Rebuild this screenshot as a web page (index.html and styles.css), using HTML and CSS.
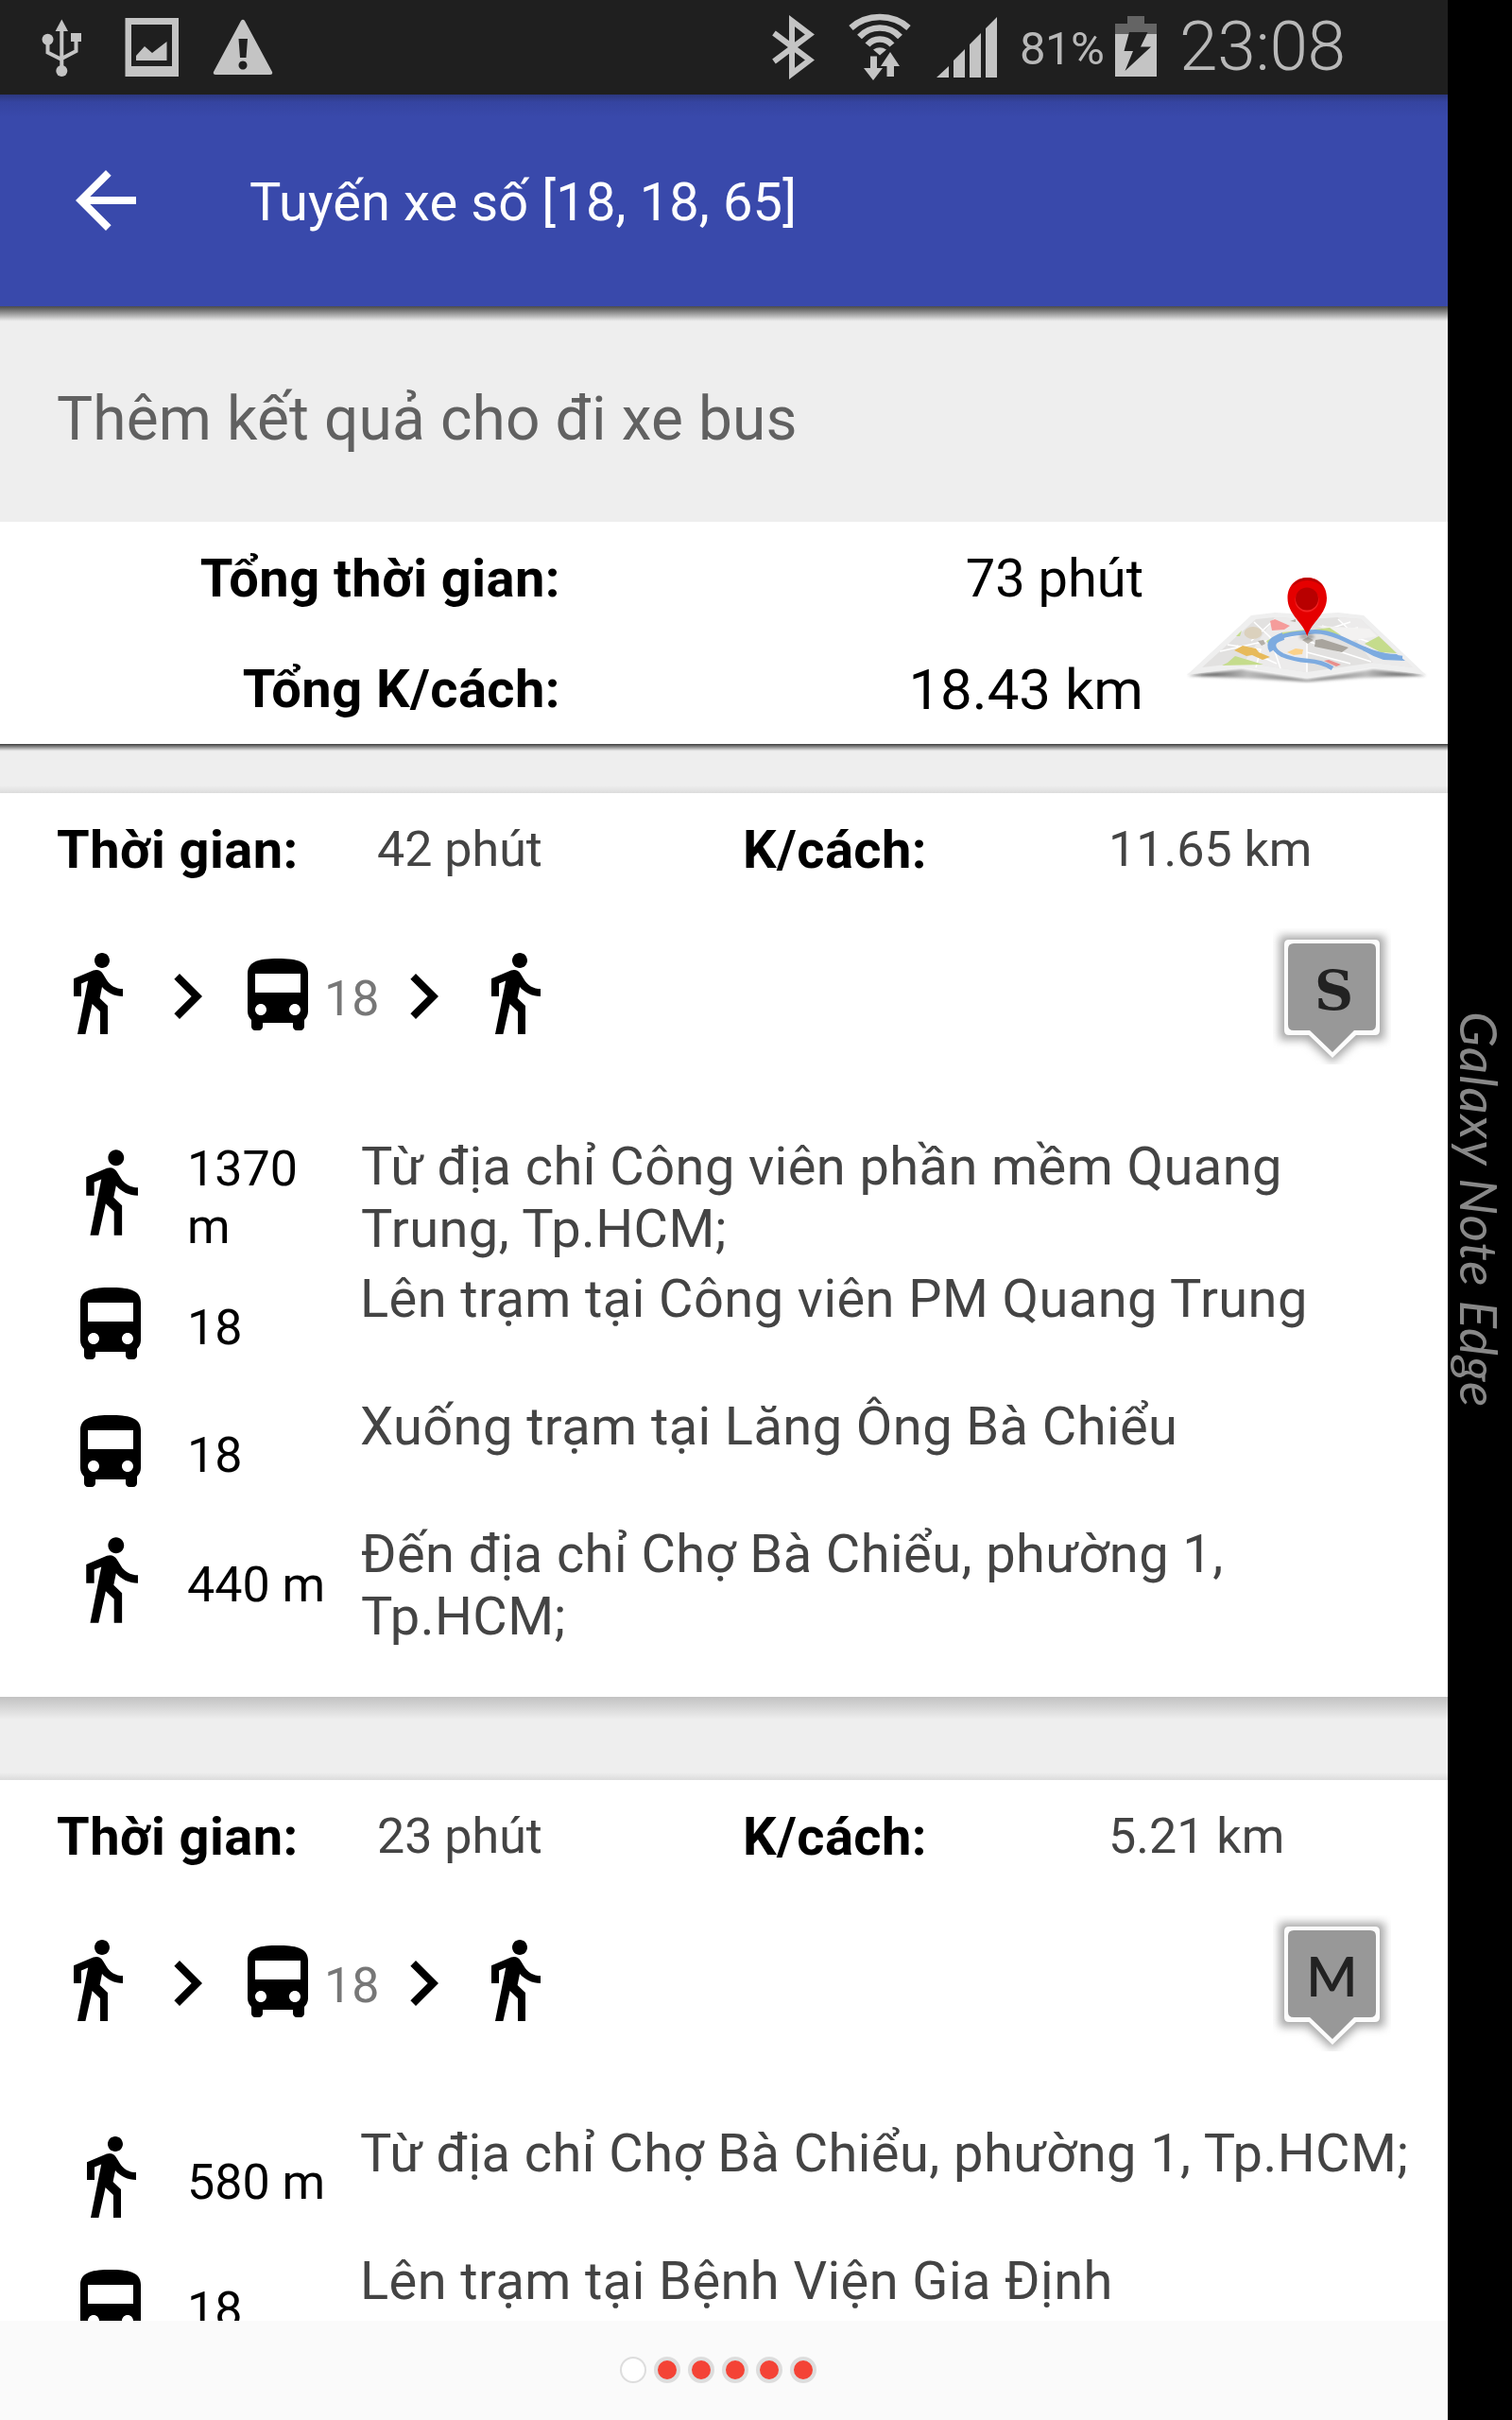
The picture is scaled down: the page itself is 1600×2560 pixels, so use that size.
FILE: index.html
```html
<!DOCTYPE html>
<html lang="vi">
<head>
<meta charset="utf-8">
<title>Tuyến xe số [18, 18, 65]</title>
<link rel="stylesheet" href="styles.css">
</head>
<body>
<svg class="sprite" aria-hidden="true">
  <symbol id="walk" viewBox="0 0 24 24"><path d="M13.5 5.5c1.1 0 2-.9 2-2s-.9-2-2-2-2 .9-2 2 .9 2 2 2zM9.8 8.9L7 23h2.1l1.8-8 2.1 2v6h2v-7.5l-2.1-2 .6-3C14.8 12 16.8 13 19 13v-2c-1.9 0-3.5-1-4.3-2.4l-1-1.6c-.4-.6-1-1-1.7-1-.3 0-.5.1-.8.1L6 8.3V13h2V9.6l1.8-.7"/></symbol>
  <symbol id="bus" viewBox="0 0 24 24"><path d="M4 16c0 .88.39 1.67 1 2.22V20c0 .55.45 1 1 1h1c.55 0 1-.45 1-1v-1h8v1c0 .55.45 1 1 1h1c.55 0 1-.45 1-1v-1.78c.61-.55 1-1.34 1-2.22V6c0-3.5-3.58-4-8-4s-8 .5-8 4v10zm3.500 1c-.83 0-1.500-.67-1.500-1.500S6.670 14 7.500 14s1.500.67 1.500 1.500S8.330 17 7.500 17zm9 0c-.83 0-1.500-.67-1.500-1.500s.67-1.500 1.500-1.500 1.500.67 1.500 1.500-.67 1.500-1.500 1.500zm1.500-6H6V6h12v5z"/></symbol>
  <symbol id="next" viewBox="0 0 24 24"><path d="M10 6L8.590 7.410 13.170 12l-4.580 4.590L10 18l6-6z"/></symbol>
  <symbol id="pin" viewBox="0 0 125 144">
    <path d="M7 8H118V118H90L63 142 36 118H7z" fill="#888" fill-opacity=".75" filter="url(#soft)"/>
    <path d="M17 12H108Q113 12 113 17V108Q113 113 108 113H88L63 137 38 113H17Q12 113 12 108V17Q12 12 17 12z" fill="#fcfcfc"/>
    <path d="M22 16H103Q109 16 109 22V102Q109 108 103 108H86L63 131 39 108H22Q16 108 16 102V22Q16 16 22 16z" fill="#989898"/>
  </symbol>
  <filter id="soft" x="-20%" y="-20%" width="140%" height="140%" color-interpolation-filters="sRGB"><feGaussianBlur stdDeviation="5"/></filter>
</svg>

<div class="device">
  <main class="screen">
    <div class="status">
      <svg class="status-left" viewBox="0 0 300 100" fill="#c4c4c4">
        <path d="M65.300 20.500L72 33H58.600z"/>
        <path d="M65.300 32V72M50.500 44V55.500L65.300 63M80.500 42V54L65.300 62" fill="none" stroke="#c4c4c4" stroke-width="4"/>
        <circle cx="65.300" cy="75" r="6"/><circle cx="50.500" cy="41.700" r="6"/><path d="M75 35h11v9H75z"/>
        <path fill-rule="evenodd" d="M132.500 19H189V81H132.500zM139 26V70H182V26z"/>
        <path d="M144 59l9-10 8 7 15.500-12v20H144z"/>
        <path fill-rule="evenodd" d="M255 22Q257 19.500 259 22L288 76Q289 79 286 79H228Q225 79 226 76zM252.500 41L254 61H260.500L262 41zM257 64.500a4.500 4.500 0 1 0 .01 0z"/>
      </svg>
      <svg class="status-net" viewBox="810 0 250 100" fill="#c4c4c4">
        <path d="M819 35L857 63.500 838 78V22L857 36.500 819 65" fill="none" stroke="#c4c4c4" stroke-width="6"/>
        <g fill="none" stroke="#c4c4c4" stroke-width="6.500"><path d="M900.500 29.500Q913 18 931 18T961.500 29.500"/><path d="M909.500 39Q918 29.500 931 29.500T952.500 39"/><path d="M918 47.500Q923 41.500 931 41.500T944 47.500"/></g>
        <path d="M924 52.500Q931 48 938 52.500L931 58.500zM921 59.500h7V72h6L924 85 914 72h7zM942 55l10 15h-6V81h-7.500V70H932z"/>
        <path d="M991 82L1004 70V82zM1009 82V64L1021 52V82zM1026 82V47L1038 35V82zM1043 82V30L1055 18V82z"/>
      </svg>
      <span class="percent">81%</span>
      <svg class="battery" viewBox="1180 0 44 100"><path fill="#646464" d="M1193 17h18v8h13v12h-44V25h13z"/><path fill="#c4c4c4" d="M1180 36h44v45h-44z"/><path fill="#1f1f1f" d="M1195 34h19.500L1207 49.500h11L1190.500 75 1199 54h-9.500z"/></svg>
      <span class="clock">23:08</span>
    </div>

    <header class="toolbar">
      <svg class="back" viewBox="0 0 24 24" fill="#fff"><path d="M20 11H7.830l5.590-5.590L12 4l-8 8 8 8 1.410-1.410L7.830 13H20v-2z"/></svg>
      <h1 class="title">Tuyến xe số [18, 18, 65]</h1>
    </header>

    <div class="subtitle"><span class="subtitle-text">Thêm kết quả cho đi xe bus</span></div>

    <section class="summary">
      <div class="totals">
        <b class="label">Tổng thời gian:</b><span class="total">73 phút</span>
        <b class="label">Tổng K/cách:</b><span class="total total-km">18.43 km</span>
      </div>
      <svg class="map" viewBox="0 0 300 150">
        <defs>
          <linearGradient id="fold" x1="0" x2="1"><stop offset="0" stop-color="#333"/><stop offset=".25" stop-color="#bbb"/><stop offset=".5" stop-color="#777"/><stop offset=".75" stop-color="#bbb"/><stop offset="1" stop-color="#333"/></linearGradient>
          <filter id="haze"><feGaussianBlur stdDeviation="1.500"/></filter>
        </defs>
        <path d="M18 124.500L75 118 144 129 214 118 270 124.500 200 127 144 131 90 128z" fill="url(#fold)" filter="url(#haze)"/>
        <path d="M17 124L85 61 110 58 144 60 177 58 204 61 270 124 214 116 144 127 75 116z" fill="#efefef"/>
        <path d="M33 116L90 65 110 63 144 65 177 63 201 65 256 116 214 111 144 121 77 111z" fill="#e2e1e0"/>
        <path d="M110 63L144 65V121L77 111zM177 63L201 65 256 116 214 111z" fill="#efeeed" opacity=".8"/>
        <g fill="none" stroke="#fff" stroke-width="1.500"><path d="M52 99L110 86 144 80M88 68L105 84 116 117M70 93L112 112M144 88L212 110M160 72L218 92M177 65L200 87M144 100L190 112M165 76L190 68M60 92L95 97 90 116M144 65V121M170 80L198 74M110 65L85 88"/></g>
        <path d="M155 72L210 75 218 83 190 88z" fill="#f3f2f1"/>
        <g fill="#c5dc8c"><path d="M205 91L220 83 239 101 222 100zM68 104L60 111 54 114 98 113zM101 88L118 79 142 76 143 80 117 84 103 91zM151 76L168 74 180 82 165 80zM69 83L75 77 73 83z"/></g>
        <path d="M118 82Q100 93 118 103 130 108 145 109T171 117" fill="none" stroke="#7dabe0" stroke-width="4.500"/>
        <path d="M108 98C103 90 110 86 119 83" fill="none" stroke="#7dabe0" stroke-width="8"/>
        <path d="M116 84Q126 80 144 79 160 76 178 84C205 96 214 103 245 106" fill="none" stroke="#7dabe0" stroke-width="4.500"/>
        <path d="M205 94Q220 102 239 102L248 109 225 108Q213 104 203 98z" fill="#7dabe0"/>
        <ellipse cx="87" cy="79.500" rx="9.500" ry="6.500" fill="#dbd1bd"/>
        <path d="M105 67L110 65 126 72 120 76 107 77z" fill="#f59c9b"/><path d="M162 109L167 108 180 113 175 115z" fill="#e98e8b"/>
        <path d="M76 93L90 96 93 100 105 105 97 108 86 103 80 104 67 98z" fill="#e7ba5a"/><path d="M123 100L132 96 140 97 139 102 130 103z" fill="#fbd28a"/>
        <path d="M153 87L160 86 188 95 181 100 152 94z" fill="#a8a49d"/><path d="M92 88L98 87 100 91 96 93zM139 87L145 84 151 87 145 91zM126 67L132 65 132 68z" fill="#b5b0a8"/>
        <ellipse cx="144" cy="83.500" rx="8" ry="3" fill="#555" opacity=".45" filter="url(#haze)"/>
        <path d="M144.300 83C140 68 123.500 60 123.500 42.500 123.500 30 132 21 144.300 21S165 30 165 42.500C165 60 148.500 68 144.300 83z" fill="#e50000"/>
        <path d="M127 32Q133 21 144.300 21T162 32Q154 24 144.300 24T127 32z" fill="#b90000"/>
        <circle cx="144" cy="45" r="12.500" fill="#f52222"/><circle cx="144" cy="43.500" r="12" fill="#b80000"/>
      </svg>
    </section>

    <div class="gap gap-first"></div>

    <section class="card">
      <div class="card-head">
        <b class="head-time">Thời gian:</b><span class="time">42 phút</span><b class="head-km">K/cách:</b><span class="km">11.65 km</span>
      </div>
      <div class="route">
        <svg class="icon route-walk"><use href="#walk"/></svg>
        <svg class="icon"><use href="#next"/></svg>
        <svg class="icon"><use href="#bus"/></svg>
        <span class="route-no">18</span>
        <svg class="icon"><use href="#next"/></svg>
        <svg class="icon route-walk"><use href="#walk"/></svg>
        <svg class="marker" viewBox="0 0 125 144"><use href="#pin"/><text class="letter-s" x="64.500" y="85.500">S</text></svg>
      </div>
      <div class="steps">
        <div class="step step-long"><svg class="icon step-walk"><use href="#walk"/></svg><span class="dist dist-two">1370 m</span><span class="desc">Từ địa chỉ Công viên phần mềm Quang<br>Trung, Tp.HCM;</span></div>
        <div class="step"><svg class="icon"><use href="#bus"/></svg><span class="dist">18</span><span class="desc">Lên trạm tại Công viên PM Quang Trung</span></div>
        <div class="step"><svg class="icon"><use href="#bus"/></svg><span class="dist">18</span><span class="desc">Xuống trạm tại Lăng Ông Bà Chiểu</span></div>
        <div class="step step-long"><svg class="icon step-walk"><use href="#walk"/></svg><span class="dist">440 m</span><span class="desc">Đến địa chỉ Chợ Bà Chiểu, phường 1,<br>Tp.HCM;</span></div>
      </div>
    </section>

    <div class="gap"></div>

    <section class="card card-cut">
      <div class="card-head">
        <b class="head-time">Thời gian:</b><span class="time">23 phút</span><b class="head-km">K/cách:</b><span class="km">5.21 km</span>
      </div>
      <div class="route">
        <svg class="icon route-walk"><use href="#walk"/></svg>
        <svg class="icon"><use href="#next"/></svg>
        <svg class="icon"><use href="#bus"/></svg>
        <span class="route-no">18</span>
        <svg class="icon"><use href="#next"/></svg>
        <svg class="icon route-walk"><use href="#walk"/></svg>
        <svg class="marker" viewBox="0 0 125 144"><use href="#pin"/><text class="letter-m" x="62.500" y="86">M</text></svg>
      </div>
      <div class="steps">
        <div class="step"><svg class="icon step-near"><use href="#walk"/></svg><span class="dist">580 m</span><span class="desc">Từ địa chỉ Chợ Bà Chiểu, phường 1, Tp.HCM;</span></div>
        <div class="step"><svg class="icon"><use href="#bus"/></svg><span class="dist">18</span><span class="desc">Lên trạm tại Bệnh Viện Gia Định</span></div>
      </div>
    </section>

    <footer class="pager">
      <i class="dot dot-current"></i><i class="dot"></i><i class="dot"></i><i class="dot"></i><i class="dot"></i><i class="dot"></i>
    </footer>
  </main>
  <aside class="edge"><span class="edge-text">Galaxy Note Edge</span></aside>
</div>
</body>
</html>
```
FILE: styles.css
```css
* { box-sizing: border-box; }
body { margin: 0; background: #000; font-family: Roboto, "Liberation Sans", sans-serif; color: #000; }
svg { display: block; flex: none; }
span, b, h1 { white-space: nowrap; flex: none; }
.sprite { position: absolute; width: 0; height: 0; }
.device { display: flex; width: 1600px; height: 2560px; overflow: hidden; }
.screen { display: flex; flex-direction: column; width: 1532px; height: 2560px; background: #eee; }

.status { display: flex; align-items: flex-start; flex: none; height: 100px; background: #1f1f1f; color: #b8b8b8; }
.status-left { width: 300px; height: 100px; }
.status-net { width: 250px; height: 100px; margin-left: 510px; }
.percent { width: 120px; padding: 23px 0 0 19px; font-size: 49px; letter-spacing: -.5px; }
.battery { width: 44px; height: 100px; }
.clock { margin: 6px 0 0 24px; font-size: 73px; font-weight: 300; letter-spacing: -.3px; }

.toolbar { display: flex; align-items: center; flex: none; height: 224px; padding-left: 64px; background: linear-gradient(#2c387f, #3544a0 8px, #3949ab 24px); color: #fff; }
.back { width: 96px; height: 96px; margin-top: -1px; }
.title { margin: 0 0 0 104px; padding-top: 4px; font-size: 56px; font-weight: 400; letter-spacing: .12px; }

.subtitle { flex: none; height: 228px; padding: 82px 0 0 60px; background: linear-gradient(#4a4a4a, #888 6px, #ddd 14px, #eee 16px); }
.subtitle-text { font-size: 64px; letter-spacing: .13px; color: #616161; }

.summary { display: flex; flex: none; height: 235px; background: #fff; }
.totals { display: grid; grid-template-columns: 593px 617px; grid-auto-rows: 117px; width: 1211px; padding-top: 27px; height: 235px; text-align: right; font-size: 56px; }
.label, .head-time, .head-km { letter-spacing: .45px; }
.total-km { font-size: 60px; margin-top: -2px; }
.map { width: 300px; height: 150px; margin: 38px 0 0 29px; }

.gap { flex: none; height: 88px; background: linear-gradient(#c2c2c2, #eee 24px, #eee 80px, #dcdcdc); }
.gap-first { height: 52px; background: linear-gradient(#3c3c3c, #888 3px, #e6e6e6 7px, #eee 8px, #eee 44px, #dcdcdc); }

.card { flex: none; height: 956px; background: #fff; overflow: hidden; }
.card-cut { height: 572px; }
.card-head { display: grid; grid-template-columns: 339px 387px 387px 1fr; height: 131px; padding: 27px 0 0 60px; font-size: 56px; }
.time, .km { font-size: 52px; color: #444; padding-top: 2px; }

.route { display: flex; align-items: flex-start; height: 231px; padding: 36px 0 0 54px; }
.icon { width: 96px; height: 96px; margin-top: 0; }
.route .route-walk { margin-top: -4px; }
.route-no { width: 58px; padding: 20px 0 0 1px; font-size: 52px; color: #777; }
.marker { width: 125px; height: 144px; margin: -24px 60px 0 auto; }
.letter-s { font: bold 57px "DejaVu Serif", serif; fill: #222; text-anchor: middle; }
.letter-m { font: 600 58px Lato, sans-serif; fill: #222; text-anchor: middle; }

.step { display: flex; align-items: flex-start; height: 135px; }
.step .icon { margin: 13px 0 0 69px; }
.step-long { height: 140px; }
.step .step-walk { width: 101px; height: 101px; margin: 9px 0 0 66px; }
.step .step-near { margin: 9px 1px 0 68px; }
.dist { width: 183px; padding-top: 33px; margin-left: 33px; font-size: 52px; line-height: 61px; }
.step-walk + .dist { margin-left: 31px; width: 184px; padding-top: 35px; }
.step-walk + .dist-two { width: 150px; margin-right: 34px; padding-top: 5px; white-space: normal; }
.desc { font-size: 56px; line-height: 66px; letter-spacing: .42px; color: #444; }

.pager { display: flex; justify-content: center; align-items: center; gap: 8px; flex: none; height: 105px; padding: 0 12px 2px 0; background: #fafafa; }
.dot { width: 28px; height: 28px; border: 4px solid #ddd; border-radius: 50%; background: #f44336; }
.dot-current { border-width: 2px; background: #fff; }

.edge { display: flex; align-items: center; justify-content: center; width: 68px; background: #000; }
.edge-text { writing-mode: vertical-rl; font: italic 400 55px Lato, sans-serif; line-height: 68px; letter-spacing: 1px; color: #888; }
```
